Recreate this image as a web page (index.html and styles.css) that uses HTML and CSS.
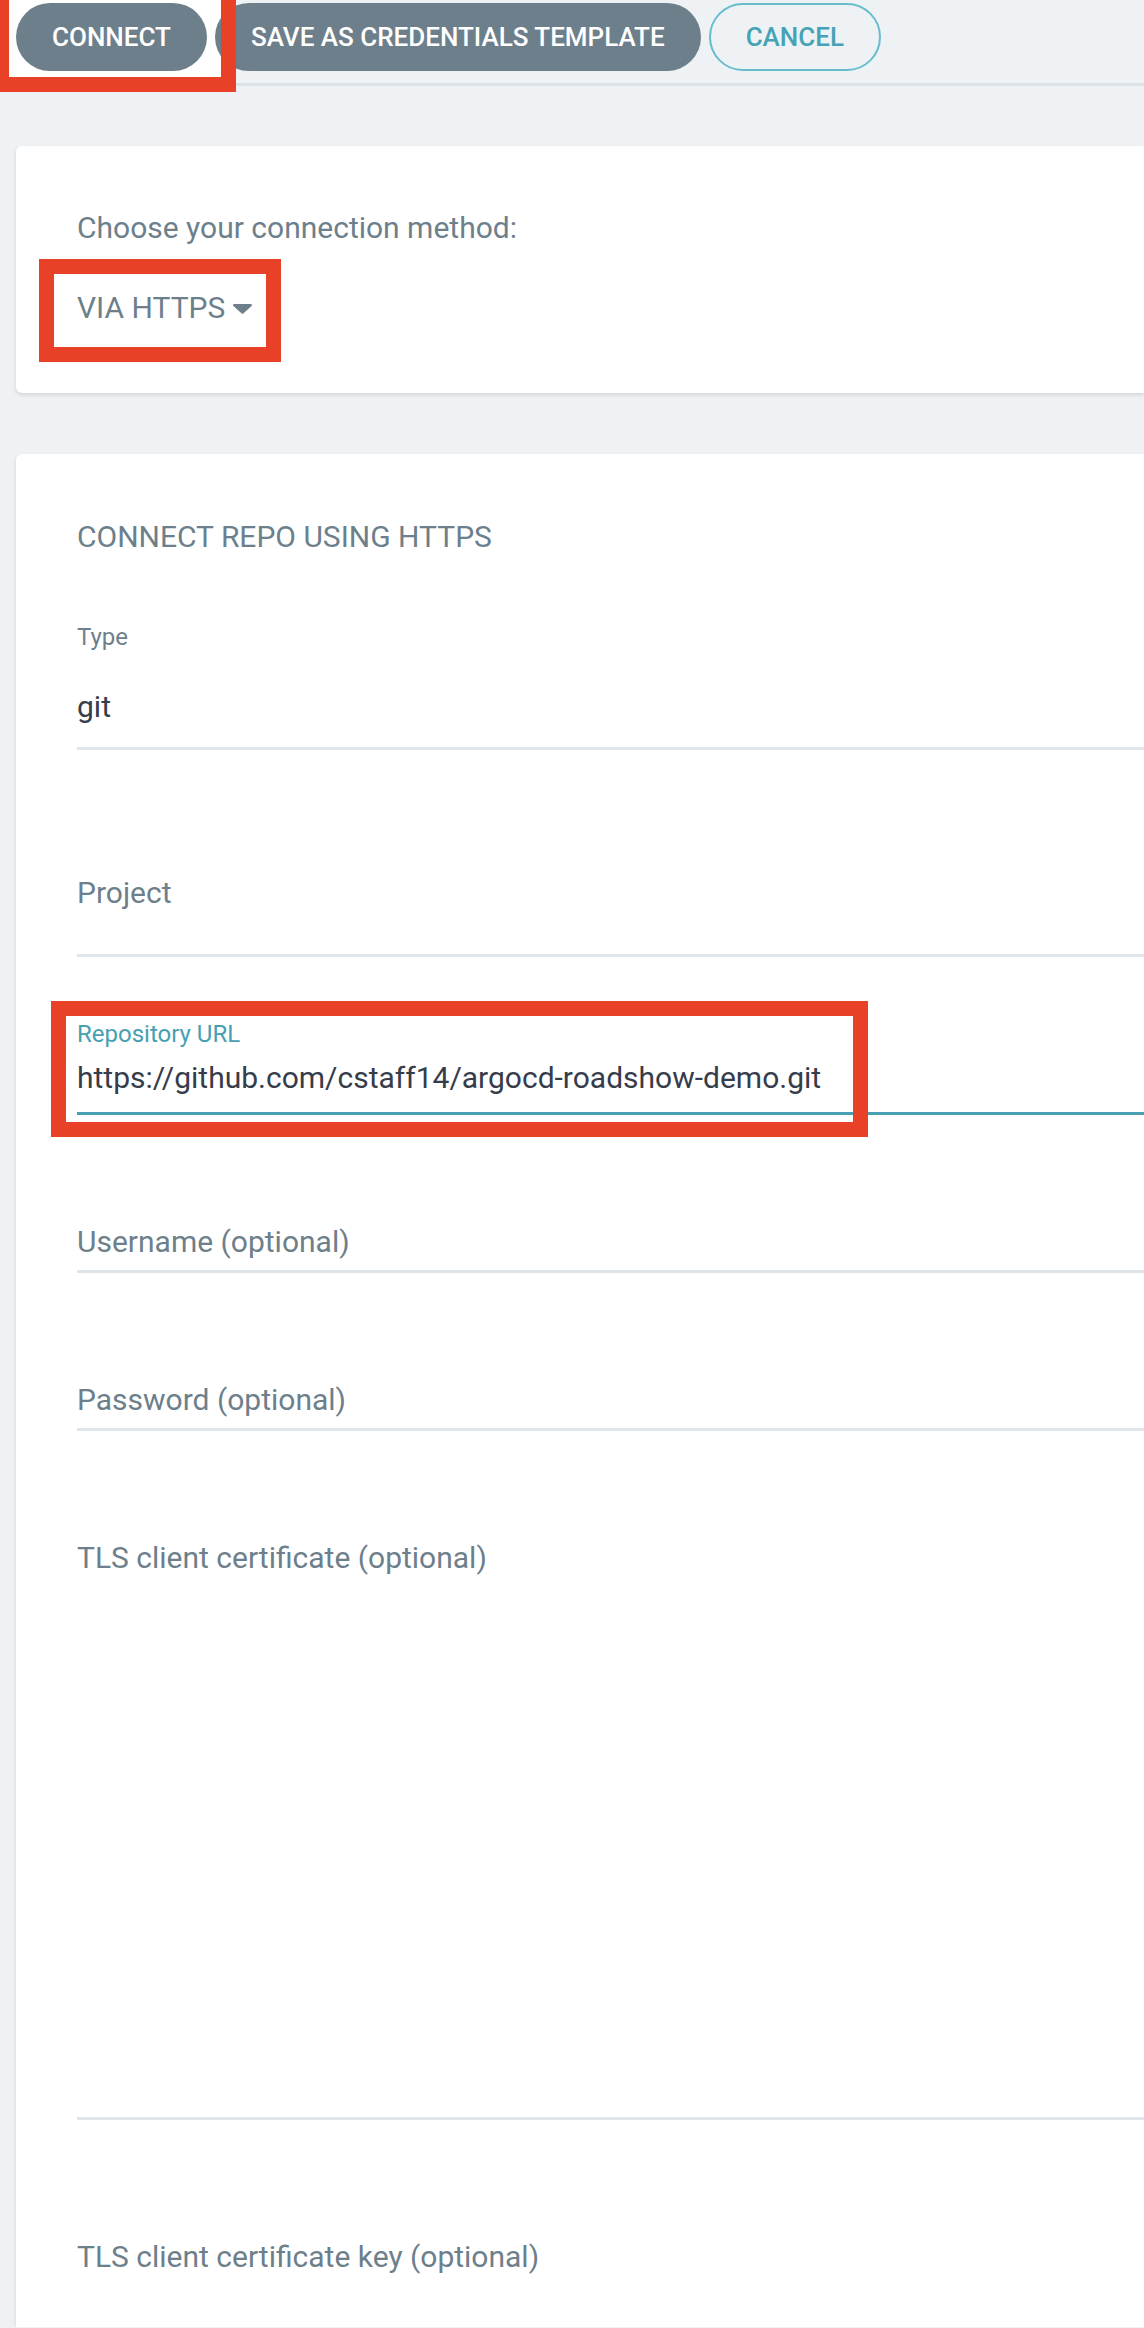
FILE: index.html
```html
<!DOCTYPE html>
<html lang="en">
<head>
<meta charset="utf-8">
<title>Connect repository</title>
<link rel="stylesheet" href="styles.css">
</head>
<body>
<div class="page">
  <div class="mark-fill"></div>

  <div class="toolbar">
    <button class="btn btn-solid">CONNECT</button>
    <button class="btn btn-solid">SAVE AS CREDENTIALS TEMPLATE</button>
    <button class="btn btn-outline">CANCEL</button>
  </div>

  <div class="card card-method">
    <div class="method-title">Choose your connection method:</div>
    <div class="method-select">
      <span>VIA HTTPS</span>
      <svg class="caret" width="19" height="10" viewBox="0 0 19 10" aria-hidden="true">
        <path d="M1.2 0 H17.8 A1.1 1.1 0 0 1 18.6 1.9 L10.3 9.5 A1.2 1.2 0 0 1 8.7 9.5 L0.4 1.9 A1.1 1.1 0 0 1 1.2 0 Z" fill="#6d7f8b"/>
      </svg>
    </div>
  </div>

  <div class="card card-form">
    <div class="form-title">CONNECT REPO USING HTTPS</div>

    <div class="field field-type">
      <div class="field-label">Type</div>
      <div class="field-input field-type-input">git</div>
    </div>

    <div class="field">
      <div class="field-label"></div>
      <div class="field-input field-project">Project</div>
    </div>

    <div class="field field-url">
      <div class="field-label field-label-active">Repository URL</div>
      <div class="field-input field-input-active">https://github.com/cstaff14/argocd-roadshow-demo.git</div>
    </div>

    <div class="field">
      <div class="field-label"></div>
      <div class="field-input field-empty">Username (optional)</div>
    </div>

    <div class="field">
      <div class="field-label"></div>
      <div class="field-input field-empty">Password (optional)</div>
    </div>

    <div class="field">
      <div class="field-label"></div>
      <div class="field-input field-empty field-textarea">TLS client certificate (optional)</div>
    </div>

    <div class="field field-after-textarea">
      <div class="field-label"></div>
      <div class="field-input field-empty field-textarea-cut">TLS client certificate key (optional)</div>
    </div>
  </div>

  <div class="mark mark-connect"></div>
  <div class="mark mark-method"></div>
  <div class="mark mark-url"></div>
</div>
</body>
</html>
```

FILE: styles.css
```css
html, body {
  margin: 0;
  padding: 0;
  overflow: hidden;
  background: #eef2f5;
}

body {
  font-family: Roboto, "Liberation Sans", Arial, sans-serif;
  color: #6d7f8b;
}

.page {
  position: relative;
}

/* ---------- toolbar ---------- */
.toolbar {
  display: flex;
  align-items: center;
  gap: 8px;
  padding: 3px 0 12px 16px;
  border-bottom: 3px solid #dce3e8;
}

.btn {
  position: relative;
  z-index: 1;
  height: 68px;
  padding: 0 36px;
  border-radius: 34px;
  border: none;
  font-family: Roboto, "Liberation Sans", Arial, sans-serif;
  font-size: 26px;
  font-weight: 500;
  line-height: 68px;
  white-space: nowrap;
  cursor: pointer;
}

.btn-solid {
  background: #6d7f8b;
  color: #ffffff;
}

.btn-outline {
  background: transparent;
  color: #46a3b5;
  border: 2px solid #68bdcc;
  padding: 0 35px;
  line-height: 64px;
}

/* ---------- cards ---------- */
.card {
  background: #ffffff;
  margin-left: 16px;
  border-radius: 6px 0 0 6px;
  box-shadow: 0 2px 4px rgba(0, 0, 0, 0.12);
  padding-left: 61px;
}

.card-method {
  margin-top: 60px;
  padding-top: 64px;
  padding-bottom: 67px;
}

.method-title {
  font-size: 30px;
  line-height: 36px;
}

.method-select {
  margin-top: 44px;
  font-size: 30px;
  line-height: 36px;
  display: flex;
  align-items: center;
  gap: 8px;
}

.caret {
  display: block;
  margin-top: 2px;
}

.card-form {
  margin-top: 61px;
  padding-top: 65px;
  border-radius: 6px 0 0 0;
}

.form-title {
  font-size: 30px;
  line-height: 36px;
}

/* ---------- fields ---------- */
.field {
  margin-top: 64px;
}

.field-label {
  height: 28px;
  font-size: 24px;
  line-height: 28px;
  margin-bottom: 12px;
  color: #6d7f8b;
}

.field-label-active {
  color: #46a0b2;
}

.field-input {
  font-size: 30px;
  line-height: 36px;
  padding-bottom: 16px;
  border-bottom: 3px solid #dee6eb;
  color: #363c4a;
  white-space: nowrap;
}

.field-input-active {
  border-bottom-color: #48a0b2;
}

.field-type {
  margin-top: 68px;
}

.field-type .field-label {
  margin-bottom: 38px;
}

.field-type-input {
  padding-bottom: 22px;
}

.field-project {
  color: #6d7f8b;
  padding-top: 21px;
  padding-bottom: 43px;
}

.field-url {
  margin-top: 63px;
}

.field-empty {
  color: #6d7f8b;
  padding-top: 5px;
  padding-bottom: 10px;
}

.field-textarea {
  height: 567px;
}

.field-after-textarea {
  margin-top: 74px;
}

/* textarea continuing below the visible frame */
.field-textarea-cut {
  height: 88px;
  padding-bottom: 0;
  border-bottom: none;
}

/* ---------- annotation boxes ---------- */
.mark-fill {
  position: absolute;
  z-index: 0;
  left: 9px;
  top: 0;
  width: 212px;
  height: 77px;
  background: #ffffff;
}

.mark {
  position: absolute;
  z-index: 2;
  box-sizing: border-box;
  border: 15px solid #e84127;
  pointer-events: none;
}

.mark-connect {
  left: 0;
  top: 0;
  width: 236px;
  height: 92px;
  border-top-width: 0;
  border-left-width: 9px;
}

.mark-method {
  left: 39px;
  top: 259px;
  width: 242px;
  height: 103px;
}

.mark-url {
  left: 51px;
  top: 1001px;
  width: 817px;
  height: 136px;
}
```
